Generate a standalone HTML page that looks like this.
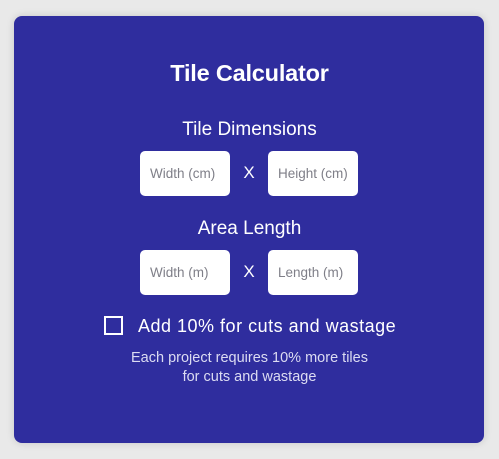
<!DOCTYPE html>
<html><head><style>
body{margin:0;width:499px;height:459px;background:#e9e9e9;font-family:"Liberation Sans",sans-serif;position:relative;overflow:hidden}
.card{position:absolute;left:14px;top:16px;width:470px;height:427px;background:#2f2d9e;border-radius:8px;box-shadow:0 0 8px rgba(0,0,0,.15)}
.t{position:absolute;left:0;width:499px;text-align:center;color:#fff}
.in{position:absolute;width:80px;padding-left:10px;height:45px;background:#fff;border-radius:5px;color:#7f7f88;font-size:13.5px;line-height:45px;text-align:left}
.x{position:absolute;color:#fff;font-size:17px;width:20px;text-align:center}
</style></head><body>
<div class="card"></div>
<div class="t" style="top:60px;font-size:23.5px;font-weight:bold;letter-spacing:-0.2px">Tile Calculator</div>
<div class="t" style="top:119px;font-size:19px">Tile Dimensions</div>
<div class="in" style="left:140px;top:151px">Width (cm)</div>
<div class="x" style="left:239px;top:163px">X</div>
<div class="in" style="left:268px;top:151px">Height (cm)</div>
<div class="t" style="top:218px;font-size:19px">Area Length</div>
<div class="in" style="left:140px;top:250px">Width (m)</div>
<div class="x" style="left:239px;top:262px">X</div>
<div class="in" style="left:268px;top:250px">Length (m)</div>
<div style="position:absolute;left:104px;top:316px;width:15px;height:15px;border:2px solid #fff"></div>
<div style="position:absolute;left:138px;top:316px;color:#fff;font-size:18px;letter-spacing:0.5px">Add 10% for cuts and wastage</div>
<div class="t" style="top:349px;font-size:14.5px;line-height:19px;color:#dcdcf2">Each project requires 10% more tiles<br>for cuts and wastage</div>
</body></html>
